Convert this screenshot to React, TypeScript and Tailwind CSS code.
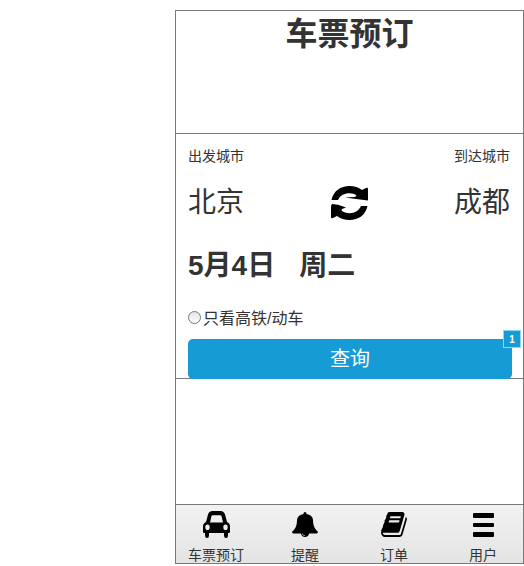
import React from "react";

const FONT =
  "font-['Liberation_Sans','Noto_Sans_CJK_SC',sans-serif]";

function RefreshIcon() {
  return (
    <svg viewBox="0 0 37 34" className="h-[34px] w-[37px]" fill="#000" aria-hidden="true">
      <path d="M.5 14C2.500 5 9.500 0 18.500 0c5 0 9 1.500 12.500 4L35 2q2-1 2 1v11.500L25 13l-11-1.500 10-.5 1.500-1.500C24 8 21.500 7.200 18.500 7.200 13 7.200 9 9.500 7 14z" />
      <path d="M36.500 20c-2 9-9 14-18 14-5 0-9-1.500-12.500-4L2 32q-2 1-2-1V20l1-2 6 .8 8 2.700-4 1.500-.5 1.500c2 2 5 2.700 8 2.700 5.500 0 9.500-2.700 11.500-7.200z" />
    </svg>
  );
}

function CarIcon() {
  return (
    <svg viewBox="0 0 27 27" className="h-[27px] w-[27px]" fill="#000" aria-hidden="true">
      <path
        fillRule="evenodd"
        d="M3 11 5 3.500Q6 0 9.500 0h8Q21 0 22 3.500l2 7.500q3 1 3 4.500V21q0 1-1 1h-1v2.500q0 2.500-2 2.500t-2-2.500V22H6v2.500Q6 27 4 27t-2-2.500V22H1q-1 0-1-1v-5.500Q0 12 3 11zM7 11.500h13l-1.500-6.500q-.3-.8-1-.8h-8q-.7 0-1 .8zM4.500 13.500a2.200 2.800 0 1 0 0 5.600 2.200 2.800 0 0 0 0-5.600zm18 0a2.200 2.800 0 1 0 0 5.600 2.200 2.800 0 0 0 0-5.600z"
      />
    </svg>
  );
}

function BellIcon() {
  return (
    <svg viewBox="64 0 1664 1792" preserveAspectRatio="none" className="h-[25px] w-[26px]" fill="#000" aria-hidden="true">
      <path d="M912 1696q0-16-16-16-59 0-101.5-42.5t-42.5-101.5q0-16-16-16t-16 16q0 73 51.5 124.500t124.500 51.500q16 0 16-16zm816-288q0 52-38 90t-90 38h-448q0 106-75 181t-181 75-181-75-75-181h-448q-52 0-90-38t-38-90q50-42 91-88t85-119.500 74.500-158.500 50-206 19.500-260q0-152 117-282.500t307-158.500q-8-19-8-39 0-40 28-68t68-28 68 28 28 68q0 20-8 39 190 28 307 158.500t117 282.500q0 139 19.500 260t50 206 74.500 158.500 85 119.500 91 88z" />
    </svg>
  );
}

function BookIcon() {
  return (
    <svg viewBox="60 128 1672 1536" preserveAspectRatio="none" className="h-[25px] w-[26px]" fill="#000" aria-hidden="true">
      <path d="M1703 478q40 57 18 129l-275 906q-19 64-76.500 107.500t-122.500 43.500h-923q-77 0-148.500-53.500t-99.500-131.500q-24-67-2-127 0-4 3-27t4-37q1-8-3-21.500t-3-19.500q2-11 8-21t16.500-23.500 16.500-23.500q23-38 45-91.500t30-91.500q3-10 .5-30t-.5-28q3-11 17-28t17-23q21-36 42-92t25-90q1-9-2.500-32t.5-28q4-13 22-30.500t22-22.500q19-26 42.500-84.500t27.500-96.500q1-8-3-25.500t-2-26.500q2-8 9-18t18-23 17-21q8-12 16.500-30.500t15-35 16-36 19.500-32 26.500-23.500 36-11.500 47.500 5.500l-1 3q38-9 51-9h761q74 0 114 56t18 130l-274 906q-36 119-71.500 153.500t-128.500 34.500h-869q-27 0-38 15-11 16-1 43 24 70 144 70h923q29 0 56-15.500t35-41.500l300-987q7-22 5-57 38 15 59 43zm-1064 2q-4 13 2 22.500t20 9.500h608q13 0 25.500-9.500t16.500-22.500l21-64q4-13-2-22.500t-20-9.500h-608q-13 0-25.500 9.500t-16.500 22.500zm-83 256q-4 13 2 22.500t20 9.500h608q13 0 25.500-9.500t16.500-22.500l21-64q4-13-2-22.500t-20-9.500h-608q-13 0-25.500 9.500t-16.500 22.500z" />
    </svg>
  );
}

function MenuIcon() {
  return (
    <svg viewBox="0 0 21 24" className="h-6 w-[21px]" fill="#000" aria-hidden="true">
      <rect width="21" height="5" rx="1" />
      <rect y="10" width="21" height="4" rx="1" />
      <rect y="19" width="21" height="5" rx="1" />
    </svg>
  );
}

const tabs = [
  { label: "车票预订", icon: <CarIcon /> },
  { label: "提醒", icon: <BellIcon /> },
  { label: "订单", icon: <BookIcon /> },
  { label: "用户", icon: <MenuIcon /> },
];

export default function App() {
  return (
    <div className={`min-h-screen bg-white pt-[10px] pl-[175px] text-[#333] ${FONT}`}>
      <div className="border border-[#797979]">
        <header className="h-[122px] text-center">
          <h1 className="text-[32px] leading-[46px] font-bold">车票预订</h1>
        </header>

        <main className="border-y border-[#797979] pt-3 pr-[11px] pl-3">
          <div className="flex justify-between pr-0.5 text-[14px] leading-5">
            <span>出发城市</span>
            <span>到达城市</span>
          </div>
          <div className="mt-4 flex items-center justify-between pr-0.5 text-[28px] leading-[42px]">
            <span>北京</span>
            <button type="button" aria-label="交换城市">
              <RefreshIcon />
            </button>
            <span>成都</span>
          </div>
          <div className="mt-[21px] flex gap-6 text-[28px] leading-[42px] font-bold">
            <span>5月4日</span>
            <span>周二</span>
          </div>
          <label className="mt-5 flex h-6 items-center gap-0.5 text-[16px]">
            <input
              type="radio"
              className="mb-1 size-[13px] appearance-none rounded-full border border-[#777] bg-linear-to-b from-[#e4e4e4] to-white checked:bg-[#169bd5]"
            />
            只看高铁/动车
          </label>
          <div className="relative mt-2 -mb-px">
            <button type="button" className="block h-10 w-full rounded-[5px] bg-[#169bd5] text-[20px] text-white">
              查询
            </button>
            <span className="absolute -top-[9px] -right-[9px] flex size-[18px] items-center justify-center border border-[#8fd4f2] bg-[#169bd5] text-[10px] font-bold text-white">
              1
            </span>
          </div>
        </main>

        <div className="h-[125px]" />

        <nav className="flex h-[59px] justify-between border-t border-[#797979] bg-linear-to-b from-[#f2f2f2] to-[#e4e4e4] px-3">
          {tabs.map((t) => (
            <button key={t.label} type="button" className="flex w-14 flex-col items-center gap-[3px] text-[14px] leading-4">
              <span className="flex h-[39px] items-center">{t.icon}</span>
              <span className="whitespace-nowrap">{t.label}</span>
            </button>
          ))}
        </nav>
      </div>
    </div>
  );
}
